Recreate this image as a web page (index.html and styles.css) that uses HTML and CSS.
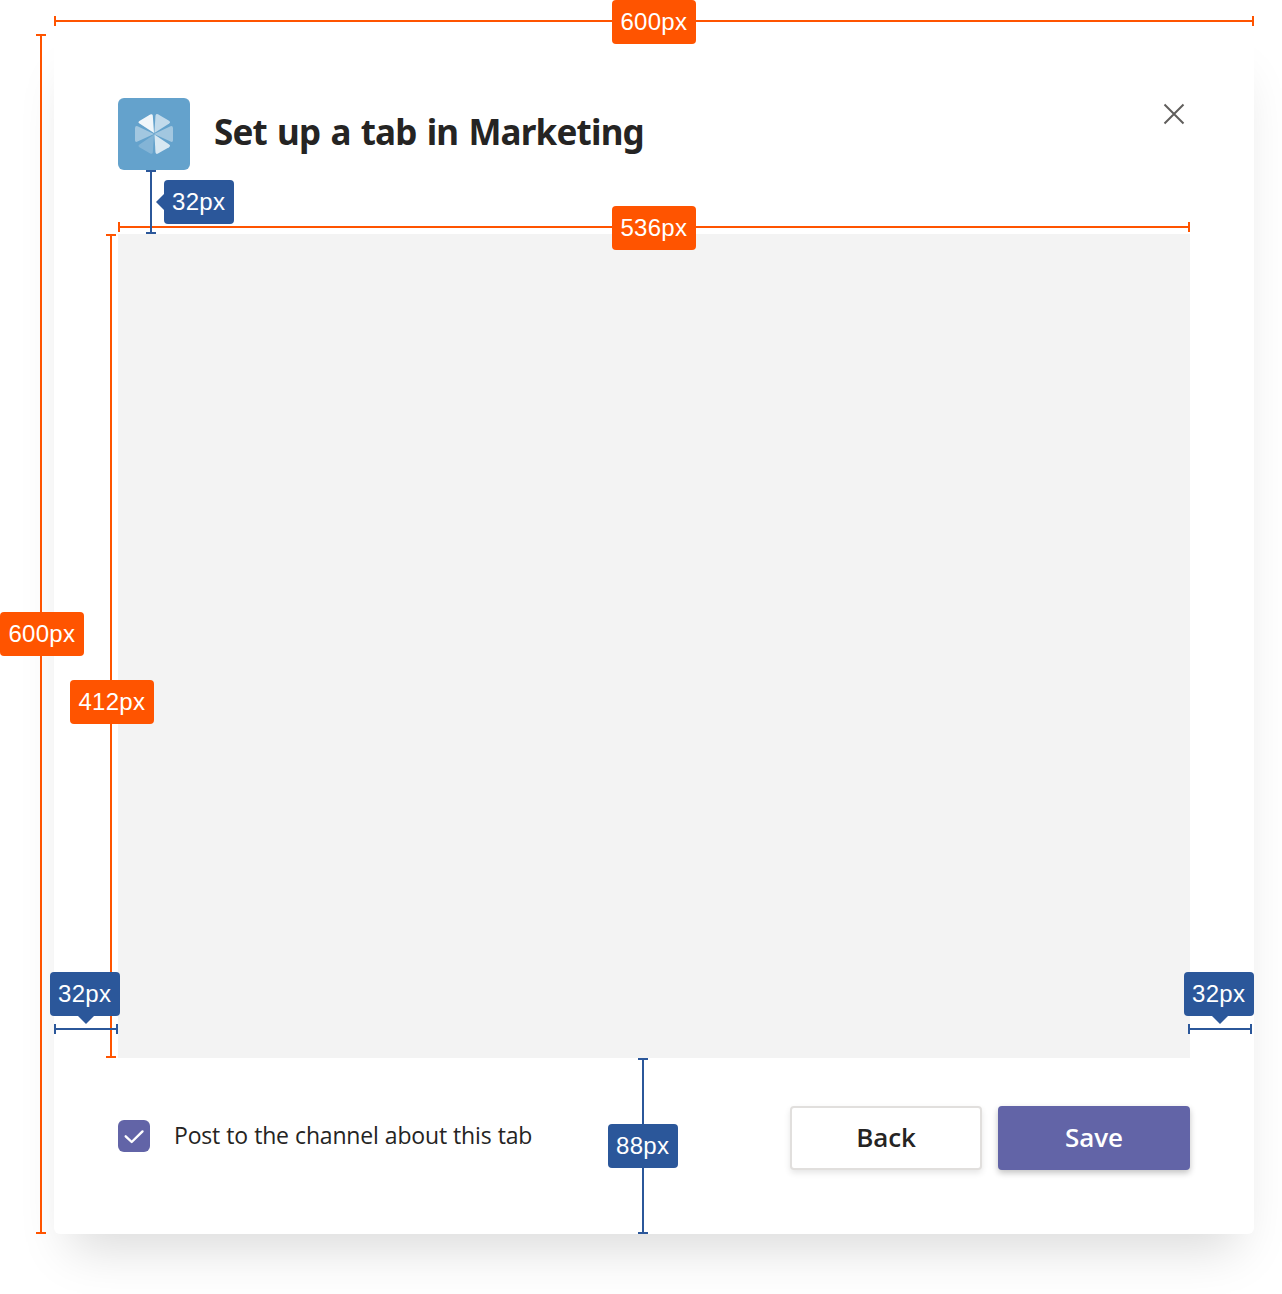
FILE: index.html
```html
<!DOCTYPE html>
<html lang="en">
<head>
<meta charset="utf-8">
<title>Set up a tab</title>
<link rel="stylesheet" href="styles.css">
</head>
<body>
<main class="dialog">
  <header class="header">
    <svg class="logo" viewBox="0 0 72 72" fill="#fff">
      <path opacity=".9" d="M21.5 25.5Q19.5 24.4 21.4 23L32.2 16.5Q34.4 15.5 34.8 17.5L36 35Z"/>
      <path opacity=".6" d="M37.5 17.5Q38 15.5 40 16.3L51 22.8Q53 24.3 51.2 25.5L36.4 35Z"/>
      <path opacity=".4" d="M17 30Q17.2 27.5 19.5 28.3L36 36L19.5 43.6Q17.2 44.5 17 42.5Z"/>
      <path opacity=".4" d="M55 30Q54.8 27.5 52.5 28.3L36 36L52.5 43.6Q54.8 44.5 55 42.5Z"/>
      <path opacity=".2" d="M21.5 46.5Q19.5 47.8 21.4 49.2L32.2 55.4Q34.4 56.4 34.8 54.5L36 36.5Z"/>
      <path opacity=".75" d="M37.5 54.5Q38 56.5 40 55.6L51 49.2Q53 47.8 51.2 46.5L36.4 36.5Z"/>
    </svg>
    <h1 class="title">Set up a tab in Marketing</h1>
    <button class="close" aria-label="Close">
      <svg width="22" height="22" viewBox="0 0 22 22" fill="none" stroke="#605e5c" stroke-width="2"><path d="M1.5 1.5L20.5 20.5M20.5 1.5L1.5 20.5"/></svg>
    </button>
  </header>
  <section class="content"></section>
  <footer class="footer">
    <span class="checkbox">
      <svg width="32" height="32" viewBox="0 0 32 32" fill="none" stroke="#fff" stroke-width="2.4" stroke-linecap="round" stroke-linejoin="round"><path d="M7.7 16.3L13.7 22L24.5 11.4"/></svg>
    </span>
    <span class="post">Post to the channel about this tab</span>
    <button class="button back"><span>Back</span></button>
    <button class="button save"><span>Save</span></button>
  </footer>
</main>

<i class="rule h orange dialog-width"></i><b class="tag orange-tag t-dialog-width">600px</b>
<i class="rule v orange dialog-height"></i><b class="tag orange-tag t-dialog-height">600px</b>
<i class="rule h orange content-width"></i><b class="tag orange-tag t-content-width">536px</b>
<i class="rule v orange content-height"></i><b class="tag orange-tag t-content-height">412px</b>
<i class="rule v blue header-gap"></i><b class="tag blue-tag point-left t-header-gap">32px</b>
<i class="rule h blue left-gap"></i><b class="tag blue-tag point-down t-left-gap">32px</b>
<i class="rule h blue right-gap"></i><b class="tag blue-tag point-down t-right-gap">32px</b>
<i class="rule v blue footer-gap"></i><b class="tag blue-tag t-footer-gap">88px</b>
</body>
</html>
```
FILE: styles.css
```css
* { box-sizing: border-box; }
html { overflow: hidden; }
body {
  position: relative;
  height: 1294px;
  margin: 0;
  padding: 34px 28px 0 54px;
  overflow: hidden;
  background: #fff;
  font-family: "Open Sans", "Noto Sans", sans-serif;
  color: #252423;
}
.dialog {
  display: flex;
  flex-direction: column;
  width: 1200px;
  height: 1200px;
  padding: 64px;
  background: #fff;
  border-radius: 6px;
  box-shadow: 0 31px 47px -16px rgba(0, 0, 0, .145);
}
.header { display: flex; height: 72px; }
.logo { width: 72px; height: 72px; border-radius: 6px; background: #64a2cc; }
.title {
  margin: 0 auto 0 24px;
  font: 700 35px/68px "Noto Sans", sans-serif;
  letter-spacing: -.8px;
  word-spacing: 1.8px;
  white-space: nowrap;
}
.close { width: 22px; height: 22px; margin: 5px 5px 0 0; padding: 0; border: 0; background: none; }
.close svg { display: block; }
.content { height: 824px; margin-top: 64px; background: #f3f3f3; }
.footer { display: flex; align-items: center; height: 64px; margin-top: 48px; }
.checkbox { width: 32px; height: 32px; margin-top: -4px; border-radius: 6px; background: #6264a7; }
.checkbox svg { display: block; }
.post { margin: -6px auto 0 24px; font-size: 23px; line-height: 32px; letter-spacing: -.18px; word-spacing: .4px; white-space: nowrap; }
.button {
  width: 192px;
  height: 64px;
  padding: 0;
  border: 2px solid #e1dfdd;
  border-radius: 4px;
  background: #fff;
  color: #252423;
  font: 600 26px/58px "Open Sans", sans-serif;
  letter-spacing: -.1px;
  box-shadow: 0 3px 6px rgba(0, 0, 0, .1);
}
.button span { display: block; height: 60px; }
.save { margin-left: 16px; border-color: #6264a7; background: #6264a7; color: #fff; box-shadow: 0 3px 6px rgba(0, 0, 0, .24); }

/* Dimension lines and their labels lie over the dialog */
.rule { position: absolute; color: #2b579a; }
.orange { color: #ff5400; }
.h {
  height: 10px;
  border: solid currentColor;
  border-width: 0 2px;
  background: linear-gradient(currentColor, currentColor) 0 4px / 100% 2px no-repeat;
}
.v {
  width: 10px;
  border: solid currentColor;
  border-width: 2px 0;
  background: linear-gradient(currentColor, currentColor) 4px 0 / 2px 100% no-repeat;
}
.dialog-width { left: 54px; top: 16px; width: 1200px; }
.dialog-height { left: 36px; top: 34px; height: 1200px; }
.content-width { left: 118px; top: 222px; width: 1072px; }
.content-height { left: 106px; top: 234px; height: 824px; }
.header-gap { left: 146px; top: 170px; height: 64px; }
.left-gap { left: 54px; top: 1024px; width: 64px; }
.right-gap { left: 1188px; top: 1024px; width: 64px; }
.footer-gap { left: 638px; top: 1058px; height: 176px; }

.tag {
  position: absolute;
  width: 70px;
  height: 44px;
  padding-left: 8px;
  border-radius: 4px;
  background: #2b579a;
  color: #fff;
  font: 400 24px/44px "Liberation Sans", sans-serif;
  letter-spacing: .3px;
}
.orange-tag { width: 84px; padding-left: 8.4px; background: #ff5400; }
.t-dialog-width { left: 612px; top: 0; }
.t-dialog-height { left: 0; top: 612px; }
.t-content-width { left: 612px; top: 206px; }
.t-content-height { left: 70px; top: 680px; }
.t-header-gap { left: 164px; top: 180px; }
.t-left-gap { left: 50px; top: 972px; }
.t-right-gap { left: 1184px; top: 972px; }
.t-footer-gap { left: 608px; top: 1124px; }
.point-left::before, .point-down::before { content: ""; position: absolute; border: 8px solid transparent; }
.point-left::before { left: -16px; top: 14px; border-right-color: #2b579a; }
.point-down::before { left: 28px; top: 44px; border-top-color: #2b579a; }
```
